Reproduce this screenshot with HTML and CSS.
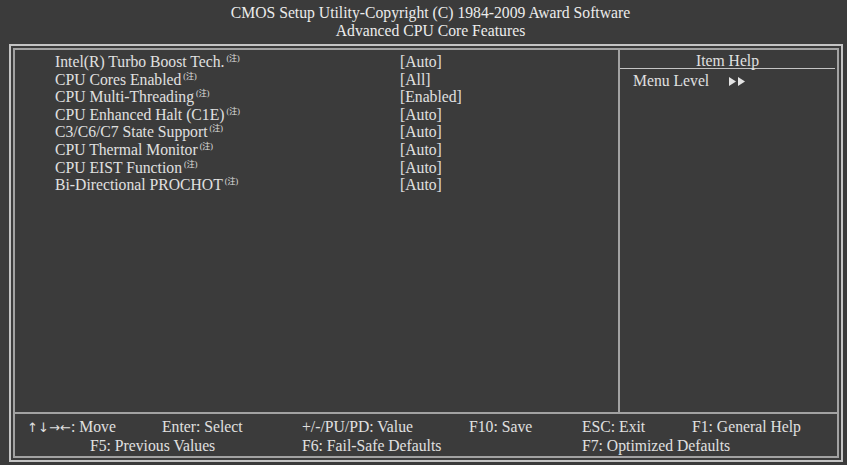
FILE: index.html
```html
<!DOCTYPE html>
<html lang="en">

<head>
    <meta charset="UTF-8">
    <title>Advanced CPU Core Features</title>
    <link rel="stylesheet" href="styles.css">
</head>

<body>

    <div class="title">
        <div>CMOS Setup Utility-Copyright (C) 1984-2009 Award Software</div>
        <div>Advanced CPU Core Features</div>
    </div>

    <div class="outer">
        <div class="inner">
            <div class="main">
                <div class="settings">
                    <div class="row"><span>Intel(R) Turbo Boost Tech.<sup class="note">(注)</sup></span><span>[Auto]</span></div>
                    <div class="row"><span>CPU Cores Enabled<sup class="note">(注)</sup></span><span>[All]</span></div>
                    <div class="row"><span>CPU Multi-Threading<sup class="note">(注)</sup></span><span>[Enabled]</span></div>
                    <div class="row"><span>CPU Enhanced Halt (C1E)<sup class="note">(注)</sup></span><span>[Auto]</span></div>
                    <div class="row"><span>C3/C6/C7 State Support<sup class="note">(注)</sup></span><span>[Auto]</span></div>
                    <div class="row"><span>CPU Thermal Monitor<sup class="note">(注)</sup></span><span>[Auto]</span></div>
                    <div class="row"><span>CPU EIST Function<sup class="note">(注)</sup></span><span>[Auto]</span></div>
                    <div class="row"><span>Bi-Directional PROCHOT<sup class="note">(注)</sup></span><span>[Auto]</span></div>
                </div>
                <div class="help">
                    <div class="help-title">Item Help</div>
                    <div class="help-level">
                        Menu Level
                        <svg class="arrows" width="17" height="9" viewBox="0 0 17 9">
                            <polygon points="0,0 7,4.5 0,9" fill="#e4e4e4"/>
                            <polygon points="9,0 16,4.5 9,9" fill="#e4e4e4"/>
                        </svg>
                    </div>
                </div>
            </div>
            <div class="keys">
                <span><span class="arrow">&uarr;</span><span class="arrow">&darr;</span><span class="arrow">&rarr;</span><span class="arrow">&larr;</span>: Move</span>
                <span>Enter: Select</span>
                <span>+/-/PU/PD: Value</span>
                <span>F10: Save</span>
                <span>ESC: Exit</span>
                <span>F1: General Help</span>
                <span class="f5">F5: Previous Values</span>
                <span class="f6">F6: Fail-Safe Defaults</span>
                <span class="f7">F7: Optimized Defaults</span>
            </div>
        </div>
    </div>

</body>

</html>
```

FILE: styles.css
```css
body {
    margin: 0;
    background: #3b3b3b;
    color: #e0e0e0;
    font-family: "Liberation Serif", "Noto Sans CJK TC", serif;
    font-size: 15.7px;
    line-height: 18px;
}

.title {
    height: 44px;
    padding: 4px 0 0 14px;
    box-sizing: border-box;
    text-align: center;
    color: #ececec;
}

.outer {
    margin-left: 9px;
    width: 834px;
    height: 418px;
    box-sizing: border-box;
    border: 2px solid #c4c4c4;
    padding: 2px;
}

.inner {
    height: 100%;
    box-sizing: border-box;
    border: 2px solid #a2a2a2;
    display: flex;
    flex-direction: column;
}

.main {
    display: flex;
    height: 362px;
    border-bottom: 2px solid #a2a2a2;
}

.settings {
    width: 603px;
    padding: 3px 0 0 40px;
    box-sizing: border-box;
    line-height: 17.6px;
}

.row {
    display: grid;
    grid-template-columns: 345px auto;
}

.note {
    font-size: 8px;
    line-height: 0;
    vertical-align: 6px;
    margin-left: 2px;
}

.help {
    flex: 1;
    border-left: 2px solid #a2a2a2;
}

.help-title {
    text-align: center;
    padding-top: 2px;
    height: 16px;
    margin-right: 2px;
    border-bottom: 1px solid #c4c4c4;
}

.help-level {
    padding: 3px 0 0 13px;
}

.arrows {
    margin-left: 16px;
}

.keys {
    display: grid;
    grid-template-columns: 135px 140px 167px 113px 110px 1fr;
    padding: 4px 0 0 12px;
}

.arrow {
    display: inline-block;
    width: 11px;
    text-align: center;
    font-family: "DejaVu Sans", sans-serif;
    font-size: 13px;
}

.f5 {
    grid-column: 1 / span 2;
    padding-left: 63px;
}

.f6 {
    grid-column: 3 / span 2;
}

.f7 {
    grid-column: 5 / span 2;
}
```
